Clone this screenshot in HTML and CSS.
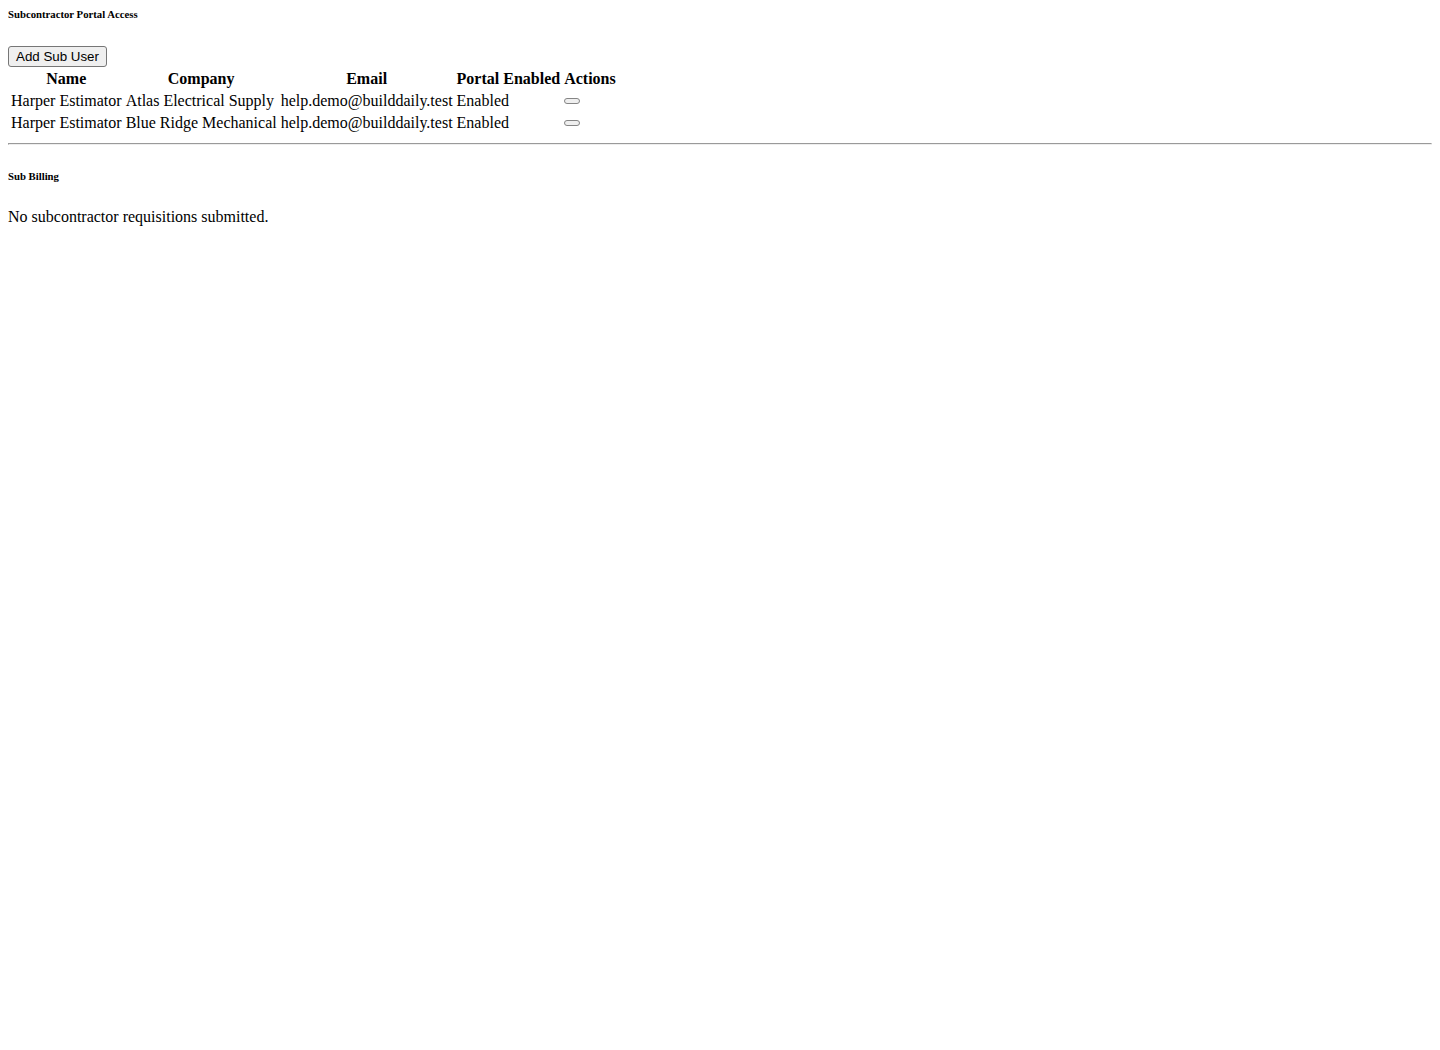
FILE: index.html
```html
<!DOCTYPE html>
<html>
<head>
<meta charset="utf-8">
<title>Subcontractor Portal Access</title>
<link rel="stylesheet" href="styles.css">
</head>
<body>
<h6 class="section-title first">Subcontractor Portal Access</h6>
<button class="btn btn-add">Add Sub User</button>
<table class="subs">
<thead>
<tr><th>Name</th><th>Company</th><th>Email</th><th>Portal Enabled</th><th>Actions</th></tr>
</thead>
<tbody>
<tr><td>Harper Estimator</td><td>Atlas Electrical Supply</td><td>help.demo@builddaily.test</td><td>Enabled</td><td class="actions"><button class="btn btn-empty"></button></td></tr>
<tr><td>Harper Estimator</td><td>Blue Ridge Mechanical</td><td>help.demo@builddaily.test</td><td>Enabled</td><td class="actions"><button class="btn btn-empty"></button></td></tr>
</tbody>
</table>
<hr class="divider">
<h6 class="section-title">Sub Billing</h6>
<p class="empty">No subcontractor requisitions submitted.</p>
</body>
</html>
```
FILE: styles.css
```css
body {
  margin: 8px;
  font-family: "Liberation Serif", "Times New Roman", serif;
  font-size: 16px;
  color: #000;
  background: #fff;
}
.section-title {
  font-size: 0.67em;
  font-weight: bold;
  margin: 2.33em 0;
}
.section-title.first {
  margin-top: 0;
}
.btn {
  font-family: "Liberation Sans", Arial, sans-serif;
  font-size: 13.333px;
  line-height: 15px;
  color: #000;
  background: #efefef;
  border: 1px solid #767676;
  border-radius: 3px;
  padding: 2px 7px;
}
.btn-add {
  margin: 1px 0 0;
}
.btn-empty {
  vertical-align: middle;
  height: 6px;
  width: 16px;
  padding: 0;
  margin: 0 0 2px;
  border-color: #858585;
  border-radius: 3px;
}
.subs {
  border-spacing: 2px;
}
.subs th, .subs td {
  padding: 1px;
}
.actions {
  text-align: left;
}
.divider {
  margin: 8px 0;
}
.empty {
  margin: 26px 0 16px;
}
```
